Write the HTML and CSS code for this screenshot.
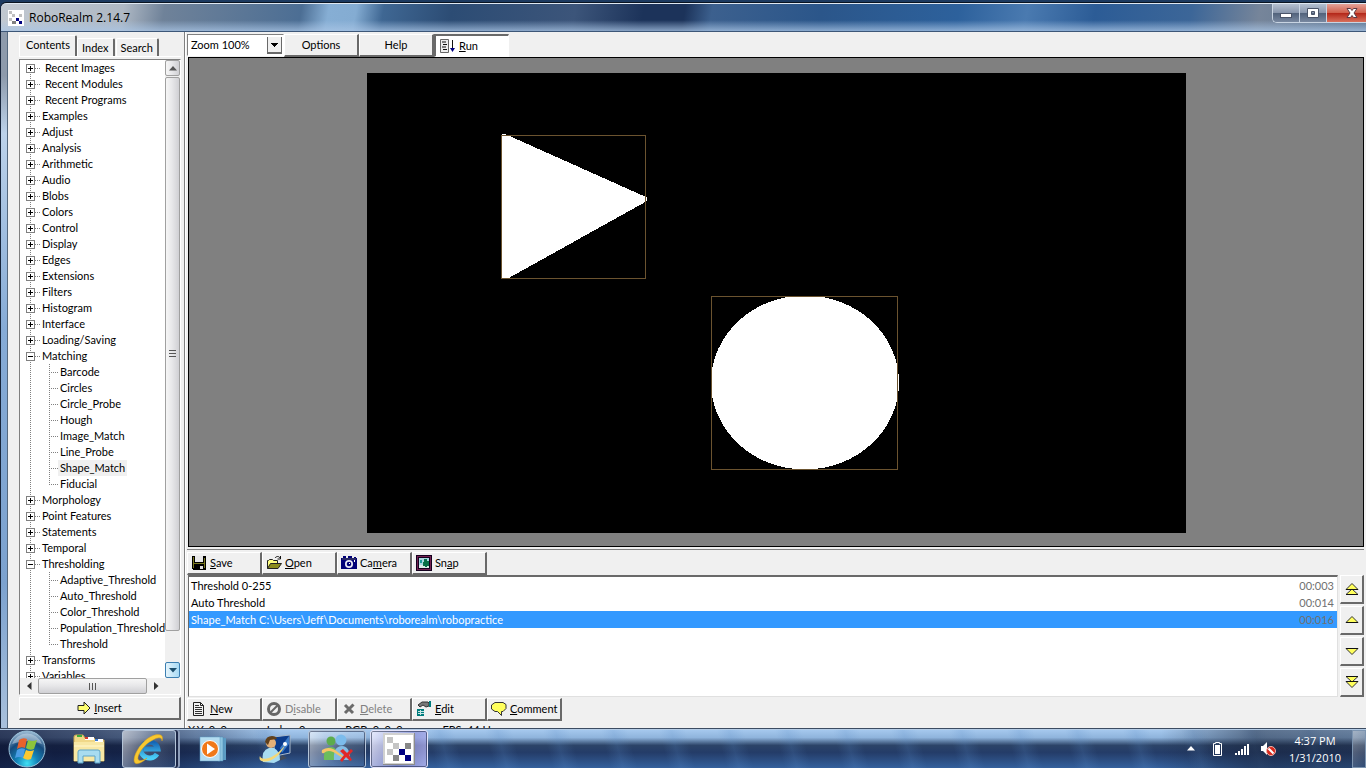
FILE: index.html
```html
<!DOCTYPE html>
<html lang="en">
<head>
    <meta charset="UTF-8">
    <meta name="viewport" content="width=device-width, initial-scale=1.0">
    <title>RoboRealm 2.14.7</title>
    <link rel="stylesheet" href="styles.css">
</head>
<body>
    <div class="window">
        <header class="titlebar">
            <svg class="logo" width="16" height="16" viewBox="0 0 16 16" shape-rendering="crispEdges">
                <rect width="16" height="16" fill="#fff"/>
                <path d="M1 1h3v3h-3zM4 4h3v3h-3zM1 8h3v3h-3zM11 4h3v3h-3z" fill="#c0c0c0"/>
                <path d="M4 11h4v3h-4z" fill="#808080"/>
                <path d="M8 8h3v3h-3zM11 11h3v3h-3z" fill="#000080"/>
            </svg>
            <h1>RoboRealm 2.14.7</h1>
            <div class="caption-buttons">
                <button class="min" aria-label="Minimize"><svg width="14" height="12" viewBox="0 0 14 12"><rect x="1.500" y="6.500" width="11" height="4" fill="#fff" stroke="#4a5468"/></svg></button>
                <button class="max" aria-label="Maximize"><svg width="14" height="12" viewBox="0 0 14 12"><path d="M1.500 1.500h11v9h-11z M5.500 4.500v3h3v-3z" fill="#fff" fill-rule="evenodd" stroke="#4a5468"/></svg></button>
                <button class="close" aria-label="Close"><svg width="14" height="12" viewBox="0 0 14 12"><path d="M2 1.500h3.500L7 3.500l1.500-2H12L9 6l3 4.500H8.500L7 8.500l-1.500 2H2L5 6z" fill="#fff" stroke="#5b3a44"/></svg></button>
            </div>
        </header>

        <div class="client">
            <aside class="sidebar">
                <div class="tabs" role="tablist">
                    <button class="tab active" role="tab">Contents</button>
                    <button class="tab" role="tab">Index</button>
                    <button class="tab" role="tab">Search</button>
                </div>
                <div class="treebox">
                    <div class="treerow">
                        <ul class="tree">
                            <li><button class="plus" aria-label="Expand"></button><span class="recent">Recent Images</span></li>
                            <li><button class="plus" aria-label="Expand"></button><span class="recent">Recent Modules</span></li>
                            <li><button class="plus" aria-label="Expand"></button><span class="recent">Recent Programs</span></li>
                            <li><button class="plus" aria-label="Expand"></button><span>Examples</span></li>
                            <li><button class="plus" aria-label="Expand"></button><span>Adjust</span></li>
                            <li><button class="plus" aria-label="Expand"></button><span>Analysis</span></li>
                            <li><button class="plus" aria-label="Expand"></button><span>Arithmetic</span></li>
                            <li><button class="plus" aria-label="Expand"></button><span>Audio</span></li>
                            <li><button class="plus" aria-label="Expand"></button><span>Blobs</span></li>
                            <li><button class="plus" aria-label="Expand"></button><span>Colors</span></li>
                            <li><button class="plus" aria-label="Expand"></button><span>Control</span></li>
                            <li><button class="plus" aria-label="Expand"></button><span>Display</span></li>
                            <li><button class="plus" aria-label="Expand"></button><span>Edges</span></li>
                            <li><button class="plus" aria-label="Expand"></button><span>Extensions</span></li>
                            <li><button class="plus" aria-label="Expand"></button><span>Filters</span></li>
                            <li><button class="plus" aria-label="Expand"></button><span>Histogram</span></li>
                            <li><button class="plus" aria-label="Expand"></button><span>Interface</span></li>
                            <li><button class="plus" aria-label="Expand"></button><span>Loading/Saving</span></li>
                            <li><button class="minus" aria-label="Collapse"></button><span>Matching</span>
                                <ul>
                                    <li><span>Barcode</span></li>
                                    <li><span>Circles</span></li>
                                    <li><span>Circle_Probe</span></li>
                                    <li><span>Hough</span></li>
                                    <li><span>Image_Match</span></li>
                                    <li><span>Line_Probe</span></li>
                                    <li><span class="current">Shape_Match</span></li>
                                    <li><span>Fiducial</span></li>
                                </ul>
                            </li>
                            <li><button class="plus" aria-label="Expand"></button><span>Morphology</span></li>
                            <li><button class="plus" aria-label="Expand"></button><span>Point Features</span></li>
                            <li><button class="plus" aria-label="Expand"></button><span>Statements</span></li>
                            <li><button class="plus" aria-label="Expand"></button><span>Temporal</span></li>
                            <li><button class="minus" aria-label="Collapse"></button><span>Thresholding</span>
                                <ul>
                                    <li><span>Adaptive_Threshold</span></li>
                                    <li><span>Auto_Threshold</span></li>
                                    <li><span>Color_Threshold</span></li>
                                    <li><span>Population_Threshold</span></li>
                                    <li><span>Threshold</span></li>
                                </ul>
                            </li>
                            <li><button class="plus" aria-label="Expand"></button><span>Transforms</span></li>
                            <li><button class="plus" aria-label="Expand"></button><span>Variables</span></li>
                        </ul>
                        <div class="vscroll">
                            <button class="sbtn" aria-label="Scroll up"><svg width="8" height="5" viewBox="0 0 8 5"><path d="M0 4.500L4 0l4 4.500z" fill="#555"/></svg></button>
                            <div class="vthumb"><i></i><i></i><i></i></div>
                            <button class="sbtn hot" aria-label="Scroll down"><svg width="8" height="5" viewBox="0 0 8 5"><path d="M0 0h8L4 4.500z" fill="#1d4f6e"/></svg></button>
                        </div>
                    </div>
                    <div class="hscroll">
                        <button class="flat" aria-label="Scroll left"><svg width="5" height="8" viewBox="0 0 5 8"><path d="M4.500 0v8L0 4z" fill="#333"/></svg></button>
                        <div class="hthumb"><i></i><i></i><i></i></div>
                        <button class="flat" aria-label="Scroll right"><svg width="5" height="8" viewBox="0 0 5 8"><path d="M0 0v8l4.500-4z" fill="#333"/></svg></button>
                    </div>
                </div>
                <button class="btn insert">
                    <svg width="14" height="14" viewBox="0 0 14 14"><path d="M1 4.500h6v-3.500l6 6-6 6v-3.500h-6z" fill="#ffff70" stroke="#222"/></svg>
                    <span><u>I</u>nsert</span>
                </button>
            </aside>

            <main class="main">
                <div class="toolbar">
                    <select class="zoom" aria-label="Zoom">
                        <option>Zoom 100%</option>
                    </select>
                    <button class="btn center">Options</button>
                    <button class="btn center">Help</button>
                    <button class="btn pressed">
                        <svg width="17" height="16" viewBox="0 0 17 16"><path d="M1.500 1.500h8v13h-8z" fill="#eee" stroke="#666"/><path d="M3 4h4M4 6.500h4M3 9h4M4 11.500h4" stroke="#111"/><path d="M13.500 2v10" stroke="#111"/><path d="M11 10h5l-2.500 4z" fill="#000080"/></svg>
                        <span><u>R</u>un</span>
                    </button>
                </div>

                <div class="viewer">
                    <svg class="image" width="819" height="460" viewBox="0 0 819 460" shape-rendering="crispEdges">
                        <rect width="819" height="460" fill="#000"/>
                        <path d="M135 61h3l141 63h1v4l-140 78h-5z" fill="#fff"/>
                        <rect x="134.500" y="62.500" width="144" height="143" fill="none" stroke="#6b532f"/>
                        <ellipse cx="438" cy="309.500" rx="94" ry="87" fill="#fff"/>
                        <rect x="344.500" y="223.500" width="186" height="173" fill="none" stroke="#6b532f"/>
                    </svg>
                </div>

                <div class="toolbar pipeline-top">
                    <button class="btn">
                        <svg width="16" height="16" viewBox="0 0 16 16" shape-rendering="crispEdges"><path d="M1 1h14v14H2l-1-1z" fill="#000"/><path d="M2 2h1v11h-1zM13 3h1v10h-1zM3 8h10v1h-10z" fill="#7b7b20"/><path d="M4 1h8v6h-8z" fill="#e8e8e8"/><path d="M9 11h3v3h-3z" fill="#ddd"/></svg>
                        <span><u>S</u>ave</span>
                    </button>
                    <button class="btn">
                        <svg width="16" height="16" viewBox="0 0 16 16"><path d="M1.500 13.500v-8h1l1-1h3l1 1h4v3" fill="#ffff80" stroke="#222"/><path d="M1.500 13.500l3-5h11l-3.500 5z" fill="#8c8c1c" stroke="#222"/><path d="M9 3c1.500-2 4-2 5 0M14.500 1v3h-3" fill="none" stroke="#111"/></svg>
                        <span><u>O</u>pen</span>
                    </button>
                    <button class="btn">
                        <svg width="16" height="16" viewBox="0 0 16 16"><path d="M0 3h2V1h3v2h2V1h4v2h2V2h2v1h1v11H0z" fill="#000078"/><path d="M1 4h14" stroke="#555"/><circle cx="8" cy="9" r="4" fill="#e8e8f4"/><circle cx="8" cy="9" r="2.300" fill="#000078"/><path d="M8 8h1v1h-1zM13 5h1v2h-1z" fill="#fff"/></svg>
                        <span>Ca<u>m</u>era</span>
                    </button>
                    <button class="btn">
                        <svg width="16" height="16" viewBox="0 0 16 16" shape-rendering="crispEdges"><path d="M0 0h16v16H0z" fill="#14001e"/><path d="M1.500 1.500h13v13h-13z" fill="none" stroke="#732050"/><path d="M3 3h10v10H3z" fill="#a8d8e0"/><path d="M3 10h10v3H3z" fill="#dcece8"/><path d="M8 4h3v2h2v5h-2v1h-2v-1h-2v-4h1z" fill="#087048"/><path d="M4 5h2v3h-2z" fill="#1c9c9c"/></svg>
                        <span>Sn<u>a</u>p</span>
                    </button>
                </div>

                <div class="pipeline">
                    <ul class="modules">
                        <li><span>Threshold 0-255</span><span class="time">00:003</span></li>
                        <li><span>Auto Threshold</span><span class="time">00:014</span></li>
                        <li class="selected"><span>Shape_Match C:\Users\Jeff\Documents\roborealm\robopractice</span><span class="time">00:016</span></li>
                    </ul>
                    <div class="order">
                        <button class="btn" aria-label="Move to top"><svg width="14" height="14" viewBox="0 0 14 14"><path d="M1 12.500L7 7l6 5.500zM1 7.500L7 1.500l6 6z" fill="#ffff5c" stroke="#333"/><path d="M1 7.500h12M1 12.500h12" stroke="#111"/></svg></button>
                        <button class="btn" aria-label="Move up"><svg width="14" height="14" viewBox="0 0 14 14"><path d="M1 9.500L7 3.500l6 6z" fill="#ffff5c" stroke="#333"/><path d="M1 9.500h12" stroke="#111"/></svg></button>
                        <button class="btn" aria-label="Move down"><svg width="14" height="14" viewBox="0 0 14 14"><path d="M1 4.500L7 10.500l6-6z" fill="#ffff5c" stroke="#333"/><path d="M1 4.500h12" stroke="#111"/></svg></button>
                        <button class="btn" aria-label="Move to bottom"><svg width="14" height="14" viewBox="0 0 14 14"><path d="M1 1.500L7 7l6-5.500zM1 6.500L7 12.500l6-6z" fill="#ffff5c" stroke="#333"/><path d="M1 1.500h12M1 6.500h12" stroke="#111"/></svg></button>
                    </div>
                </div>

                <div class="toolbar pipeline-bottom">
                    <button class="btn">
                        <svg width="16" height="16" viewBox="0 0 16 16"><path d="M2.500 1.500h7l3 3v10h-10z" fill="#f4f4f4" stroke="#222"/><path d="M9.500 1.500v3h3" fill="none" stroke="#222"/><path d="M4 4.500h4M4 6.500h7M4 8.500h7M4 10.500h7M4 12.500h7" stroke="#333"/></svg>
                        <span><u>N</u>ew</span>
                    </button>
                    <button class="btn" disabled>
                        <svg width="16" height="16" viewBox="0 0 16 16"><circle cx="8" cy="8" r="5.500" fill="none" stroke="#666" stroke-width="3"/><path d="M4.500 11.500l7-7" stroke="#666" stroke-width="2"/></svg>
                        <span>D<u>i</u>sable</span>
                    </button>
                    <button class="btn" disabled>
                        <svg width="16" height="16" viewBox="0 0 16 16"><path d="M4 4l8 8M12.500 3.500L4 12" stroke="#6a6a6a" stroke-width="3"/></svg>
                        <span><u>D</u>elete</span>
                    </button>
                    <button class="btn">
                        <svg width="16" height="16" viewBox="0 0 16 16"><path d="M2 4l4-3h6l1 1v3l-3 1-3-2-3 2z" fill="#777" stroke="#333"/><path d="M13 0h2v6h-2z" fill="#007c7c"/><path d="M1 8h7v7H1z" fill="#007c7c"/><path d="M2 10.500h6M2 12.500h6M4.500 9v5" stroke="#c8e4e4"/></svg>
                        <span><u>E</u>dit</span>
                    </button>
                    <button class="btn">
                        <svg width="16" height="16" viewBox="0 0 16 16"><path d="M4 1.500h8l3 2v4l-3 3h-1.500v4l-4-4H4L.5 8V4z" fill="#ffff5c" stroke="#333"/></svg>
                        <span><u>C</u>omment</span>
                    </button>
                </div>
                <div class="status"><span>X,Y: 0, 0</span><span>Index: 0</span><span>RGB: 0, 0, 0</span><span>FPS: 44 Hz</span></div>
            </main>
        </div>
    </div>

    <footer class="taskbar">
        <button class="start" aria-label="Start">
            <svg width="38" height="38" viewBox="0 0 38 38">
                <defs>
                    <radialGradient id="orb" cx="50%" cy="90%" r="85%">
                        <stop offset="0" stop-color="#3fe0f4"/>
                        <stop offset=".35" stop-color="#1383b8"/>
                        <stop offset=".7" stop-color="#164a7c"/>
                        <stop offset="1" stop-color="#8fb0cc"/>
                    </radialGradient>
                </defs>
                <circle cx="19" cy="19" r="18" fill="url(#orb)" stroke="#9cc4dc"/>
                <path d="M4 14a16 16 0 0 1 30 0q-14-6-30 0z" fill="#dce8f4" opacity=".45"/>
                <path d="M11 10q4-3 8-1l-2 9q-4-2-8 1z" fill="#e8622c"/>
                <path d="M20 10q4 2 9 0l-3 9q-4 2-8-1z" fill="#8cc43c"/>
                <path d="M9 20q4-3 8-1l-2 9q-4-2-8 0z" fill="#4a9ce4"/>
                <path d="M18 20q4 2 8 0l-3 9q-4 2-8-1z" fill="#fcc830"/>
            </svg>
        </button>
        <button class="task" aria-label="Windows Explorer">
            <svg width="34" height="32" viewBox="0 0 34 32">
                <path d="M2 4q0-2 2-2h7l2 3h9l2 2h8v21H2z" fill="#f0d888" stroke="#c8a850"/>
                <path d="M5 2h5v2H5z" fill="#3cac3c"/><path d="M13 4h9v3h-9zM23 6h8v3h-8z" fill="#fff"/><path d="M13 4h3v2h-3z" fill="#d83c2c"/><path d="M23 6h3v2h-3z" fill="#3c7cd4"/>
                <path d="M2 9h30v19H2z" fill="#f8e8a4"/><path d="M2 13h30" stroke="#fff8d0"/>
                <path d="M6 30V19q0-2 2-2h18q2 0 2 2v11h-5v-7H11v7z" fill="#a8dcf0" stroke="#5ca4c8"/>
            </svg>
        </button>
        <button class="task open stacked" aria-label="Internet Explorer">
            <svg width="34" height="32" viewBox="0 0 34 32">
                <defs><linearGradient id="ie" x1="0" y1="0" x2="0" y2="1"><stop offset="0" stop-color="#1464b4"/><stop offset="1" stop-color="#4cd0f8"/></linearGradient></defs>
                <path d="M25 21a8.500 8 0 1 1 1-5H12" fill="none" stroke="url(#ie)" stroke-width="5"/>
                <path d="M3 30C-1 26 8 8 20 3c8-3 12-1 10 5 0-4-4-4-9-1C12 11 5 22 6 26c1 3 6 1 9-1-4 4-10 7-12 5z" fill="#f8c830" stroke="#d89c18" stroke-width=".5"/>
            </svg>
        </button>
        <button class="task" aria-label="Windows Media Player">
            <svg width="30" height="30" viewBox="0 0 30 30">
                <path d="M22 4h6v22h-6z" fill="#5c9cc4"/><path d="M20 3h5v24h-5z" fill="#8cc4e0" stroke="#4c8cb4" stroke-width=".5"/><path d="M2 3h20v24H2z" fill="#b4dcf0" stroke="#5c9cc4" stroke-width=".5"/>
                <circle cx="12" cy="15" r="8.500" fill="#f07818" stroke="#fff"/><path d="M9 9.500l8 5.500-8 5.500z" fill="#fff"/>
            </svg>
        </button>
        <button class="task" aria-label="Remote Assistance">
            <svg width="34" height="30" viewBox="0 0 34 30">
                <path d="M15 3l17-2v18l-15 3z" fill="#0c3c8c" stroke="#a8b8c8"/><path d="M22 14L31 2v8l-7 9z" fill="#3c7cc8"/><path d="M24 21l5 3-8 3z" fill="#444c58"/>
                <path d="M5 28q-2-12 6-14h5q6 3 6 12l-6 3z" fill="#a8dcf0"/><circle cx="13" cy="9" r="5" fill="#e4b078"/><path d="M7 8q1-6 7-6 4 0 5 3l-7 1-2 5z" fill="#60401c"/>
                <path d="M2 22c1 5 14 4 25-11-5 13-19 20-25 15-1-2 0-4 0-4z" fill="#f4d878"/><circle cx="27" cy="10" r="2" fill="#fff"/>
            </svg>
        </button>
        <button class="task open" aria-label="Windows Live Messenger">
            <svg width="34" height="30" viewBox="0 0 34 30">
                <circle cx="11" cy="7" r="4.500" fill="#5cac4c"/><path d="M4 26q-1-13 7-13 7 0 7 13z" fill="#6cbc5c"/>
                <circle cx="21" cy="6" r="5.500" fill="#7cbcec"/><path d="M14 26q-1-14 8-14 8 0 8 14z" fill="#84bce4"/>
                <path d="M2 16q8-5 17 3t13-2q-5 11-14 4T4 19q-3 1-2-3z" fill="#f4c468"/>
                <path d="M20 17l3-2 4 4 4-4 2 2-4 4 3 5-2 1-4-4-4 5-2-2 4-5z" fill="#e02828"/>
            </svg>
        </button>
        <button class="task open focused" aria-label="RoboRealm">
            <svg width="32" height="32" viewBox="0 0 32 32" shape-rendering="crispEdges">
                <rect width="32" height="32" fill="#8c8c8c"/><rect width="31" height="31" fill="#d0d0d0"/><rect x="2" y="2" width="28" height="28" fill="#fff"/>
                <path d="M4 4h6v6h-6zM10 10h6v6h-6zM4 16h6v6h-6z" fill="#c4c4c4"/>
                <path d="M22 10h6v6h-6zM10 22h6v6h-6z" fill="#888"/><path d="M16 16h6v6h-6zM22 22h6v6h-6z" fill="#000080"/>
            </svg>
        </button>
        <div class="tray">
            <svg width="8" height="5" viewBox="0 0 8 5"><path d="M0 4.500L4 0l4 4.500z" fill="#fff"/></svg>
            <svg width="11" height="16" viewBox="0 0 11 16"><path d="M3.500 1.500h4v1h2v12h-8v-12h2z" fill="none" stroke="#fff"/><path d="M3 4h5v9H3z" fill="#fff"/></svg>
            <svg width="15" height="14" viewBox="0 0 15 14"><path d="M1 11h2v2h-2zM4 9h2v4h-2zM7 7h2v6h-2zM10 4h2v9h-2zM13 2h2v11h-2z" fill="#fff"/></svg>
            <svg width="16" height="16" viewBox="0 0 16 16"><path d="M1 5h2l4-4v13l-4-4H1z" fill="#fff"/><circle cx="11" cy="10" r="4.500" fill="#d8281c" stroke="#f0b0a8"/><path d="M8.500 7.500l5 5" stroke="#fff" stroke-width="2"/></svg>
        </div>
        <div class="clock"><span>4:37 PM</span><span>1/31/2010</span></div>
        <button class="peek" aria-label="Show desktop"></button>
    </footer>
</body>
</html>
```

FILE: styles.css
```css
*{
    box-sizing: border-box;
}
body{
    margin: 0;
    height: 100vh;
    display: flex;
    flex-direction: column;
    overflow: hidden;
    font-family: Lato, "Liberation Sans", sans-serif;
    font-size: 11px;
    line-height: 16px;
    color: #000;
    background-color: #1c3a60;
}
button, select{
    font: inherit;
    color: inherit;
    margin: 0;
    padding: 0;
    border: 0;
    border-radius: 0;
    background: none;
}
svg{
    display: block;
    flex: none;
}
ul{
    margin: 0;
    padding: 0;
    list-style: none;
}

/* window frame */
.window{
    flex: 1;
    min-height: 0;
    display: flex;
    flex-direction: column;
    margin-top: 2px;
    border-top: 1px solid #0a1420;
    border-left: 1px solid #16243a;
    border-top-left-radius: 6px;
    background: linear-gradient(#8d9aab, #8d9aab 10%, #bcd2ea 18%, #86abd6 45%, #7ca2cf 80%, #a8c0dc);
}
.titlebar{
    flex: none;
    height: 29px;
    display: flex;
    align-items: center;
    padding-left: 7px;
    border-top: 1px solid #dfe8f2;
    border-bottom: 1px solid #3d5778;
    border-top-left-radius: 6px;
    background:
        linear-gradient(transparent 60%, rgba(170, 198, 230, 0.75)),
        linear-gradient(100deg, #c2c9d1 0, #aeb8c4 9%, #6f8299 12%, #4c6e94 22%, #86aed4 24%, #84acd2 26%, #3f6793 28%, #2c4c74 33%, #3c557a 42%, #1c335a 47%, #1c335a 50%, #3c608e 52%, #2b568a 60%, #2d619c 70%, #4a7ab0 75%, #2c5c96 80%, #3c6698 87%, #76859a 92%, #5c7490);
}
.titlebar h1{
    flex: 1;
    margin: 0 0 0 5px;
    font-family: "Open Sans", "Noto Sans", sans-serif;
    font-size: 12px;
    font-weight: normal;
}
.caption-buttons{
    align-self: flex-start;
    display: flex;
    height: 19px;
    border: 1px solid #c8d4e2;
    border-top: 0;
    border-right: 0;
    border-bottom-left-radius: 5px;
    overflow: hidden;
}
.caption-buttons button{
    width: 27px;
    display: flex;
    align-items: center;
    justify-content: center;
    border-right: 1px solid #c8d4e2;
    background: linear-gradient(#b4c0d0, #8896ac 48%, #52637c 52%, #7888a0);
}
.caption-buttons .close{
    width: 39px;
    padding-left: 10px;
    border-right: 0;
    background: linear-gradient(#e4a298, #d0604c 48%, #b4281a 52%, #d8705c);
}
.client{
    flex: 1;
    min-height: 0;
    display: flex;
    margin-left: 6px;
    border-left: 1px solid #54687e;
    background-color: #f0f0f0;
}

/* left panel */
.sidebar{
    flex: none;
    width: 177px;
    display: flex;
    flex-direction: column;
    padding: 4px 3px 8px 11px;
    border-right: 1px solid #808080;
}
.tabs{
    display: flex;
    align-items: flex-end;
    height: 21px;
    border-bottom: 1px solid #fff;
}
.tab{
    height: 18px;
    padding: 0 4px;
    border-top: 1px solid #fff;
    border-left: 1px solid #fff;
    border-right: 2px solid #696969;
    border-radius: 2px 2px 0 0;
    margin-right: 1px;
}
.tab.active{
    height: 21px;
    padding: 0 5px 3px 6px;
    margin: 0;
}
.treebox{
    flex: 1;
    min-height: 0;
    display: flex;
    flex-direction: column;
    margin-top: 2px;
    border: 1px solid #808080;
    border-right-color: #fff;
    border-bottom-color: #fff;
    background-color: #fff;
}
.treerow{
    flex: 1;
    min-height: 0;
    display: flex;
}
.tree{
    flex: 1;
    min-width: 0;
    height: 100%;
    overflow: hidden;
    white-space: nowrap;
    background: repeating-linear-gradient(#808080 0 1px, transparent 1px 2px) 10px 8px / 1px 100% no-repeat;
}
.tree > li{
    display: grid;
    grid-template-columns: 9px 1fr;
    align-items: center;
    padding-left: 6px;
}
.tree > li > button{
    width: 9px;
    height: 9px;
    border: 1px solid #808080;
    background: linear-gradient(#000, #000) center / 5px 1px no-repeat, #fff;
}
.tree > li > .plus{
    background: linear-gradient(#000, #000) center / 5px 1px no-repeat, linear-gradient(#000, #000) center / 1px 5px no-repeat, #fff;
}
.tree > li > span{
    display: flex;
    align-items: center;
    gap: 2px;
}
.tree > li > span::before{
    content: "";
    width: 5px;
    border-top: 1px dotted #808080;
}
.tree > li > .recent{
    gap: 5px;
}
.tree ul{
    grid-column: 1 / -1;
    padding-left: 23px;
}
.tree ul li{
    display: flex;
    align-items: center;
    background: repeating-linear-gradient(#808080 0 1px, transparent 1px 2px) 0 0 / 1px 100% no-repeat;
}
.tree ul li:last-child{
    background-size: 1px 9px;
}
.tree ul li::before{
    content: "";
    flex: none;
    width: 9px;
    border-top: 1px dotted #808080;
}
.tree ul span{
    padding: 0 2px;
}
.current{
    background-color: #f0f0f0;
}
.vscroll{
    flex: none;
    width: 15px;
    display: flex;
    flex-direction: column;
    background-color: #f0f0f0;
}
.sbtn, .vthumb, .hthumb{
    display: flex;
    align-items: center;
    justify-content: center;
    border: 1px solid #a0a0a0;
    border-radius: 2px;
    background: linear-gradient(90deg, #f6f6f6, #e8e8ea 45%, #d0d0d4);
}
.sbtn{
    flex: none;
    height: 16px;
}
.sbtn.hot{
    border-color: #3c7fb1;
    background: linear-gradient(90deg, #e4f4fc, #a9dbf5);
}
.vthumb{
    height: 554px;
    margin: 1px 0 auto;
    flex-direction: column;
    gap: 1px;
}
.vthumb i{
    width: 7px;
    height: 2px;
    border-top: 1px solid #555;
}
.hscroll{
    flex: none;
    height: 16px;
    display: flex;
    margin-right: 15px;
    background-color: #f0f0f0;
    box-shadow: 15px 0 #f0f0f0;
}
.flat{
    width: 18px;
    display: flex;
    align-items: center;
    justify-content: center;
}
.hthumb{
    flex: 1;
    gap: 1px;
    background: linear-gradient(#f6f6f6, #e8e8ea 45%, #d0d0d4);
}
.hthumb i{
    width: 2px;
    height: 7px;
    border-left: 1px solid #555;
}

/* raised buttons */
.btn{
    width: 75px;
    height: 23px;
    display: flex;
    align-items: center;
    gap: 3px;
    padding: 0 3px;
    border: 1px solid #fff;
    border-right: 2px solid #696969;
    border-bottom: 2px solid #696969;
    background-color: #f0f0f0;
}
.btn:disabled{
    color: #808080;
}
.center, .insert{
    justify-content: center;
}
.insert{
    flex: none;
    width: 100%;
    margin-top: 2px;
}
.pressed{
    border: 1px solid #fff;
    border-top: 2px solid #696969;
    border-left: 2px solid #696969;
    background-color: #fff;
}

/* right panel */
.main{
    flex: 1;
    min-width: 0;
    display: flex;
    flex-direction: column;
    padding: 2px 2px 0;
    border-left: 1px solid #fff;
}
.toolbar{
    flex: none;
    display: flex;
    margin-left: -1px;
}
.zoom{
    width: 97px;
    height: 22px;
    padding: 0 3px;
    appearance: none;
    border: 1px solid #808080;
    border-right-color: #fff;
    border-bottom-color: #fff;
    background:
        linear-gradient(#000, #000) right 5px top 8px / 7px 1px no-repeat,
        linear-gradient(#000, #000) right 6px top 9px / 5px 1px no-repeat,
        linear-gradient(#000, #000) right 7px top 10px / 3px 1px no-repeat,
        linear-gradient(#000, #000) right 8px top 11px / 1px 1px no-repeat,
        linear-gradient(#f0f0f0, #f0f0f0) right 2px top 2px / 13px 15px no-repeat,
        linear-gradient(#696969, #696969) right 1px top 2px / 15px 17px no-repeat,
        #fff;
}
.viewer{
    flex: 1;
    min-height: 0;
    display: flex;
    align-items: center;
    justify-content: center;
    padding-top: 1px;
    border: 1px solid #000;
    background-color: #808080;
}
.image{
    max-width: 100%;
    max-height: 100%;
}
.pipeline-top{
    margin-top: 2px;
    padding-top: 2px;
    border-top: 1px solid #808080;
}
.pipeline{
    flex: none;
    display: flex;
    gap: 2px;
}
.modules{
    flex: 1;
    border: 1px solid #e0e0e0;
    border-top: 2px solid #696969;
    border-left: 1px solid #696969;
    background-color: #fff;
}
.modules li{
    display: flex;
    justify-content: space-between;
    padding: 0 3px 0 2px;
    line-height: 17px;
}
.modules .selected{
    color: #fff;
    background-color: #3399ff;
}
.time{
    color: #707070;
}
.order{
    display: flex;
    flex-direction: column;
    gap: 2px;
}
.order .btn{
    width: 24px;
    height: 29px;
    justify-content: center;
}
.pipeline-bottom{
    margin-top: 1px;
}
/* runs on under the taskbar */
.status{
    flex: none;
    height: 7px;
    display: flex;
    gap: 40px;
    overflow: hidden;
    padding-top: 1px;
}

/* taskbar */
.taskbar{
    flex: none;
    height: 40px;
    display: flex;
    align-items: center;
    gap: 4px;
    border-top: 1px solid #3c4c62;
    box-shadow: inset 0 1px #b4cce6;
    background:
        linear-gradient(90deg, rgba(8, 14, 44, 0.75), rgba(8, 14, 44, 0.5) 12%, transparent 20%, transparent 85%, rgba(20, 28, 48, 0.5) 92%, rgba(20, 28, 48, 0.4)),
        repeating-linear-gradient(75deg, transparent 0 30px, rgba(90, 140, 200, 0.2) 42px, transparent 56px),
        linear-gradient(#a8cbf0, #8fb4dc 22%, #2c4468 42%, #243c68 60%, #34609c);
}
.taskbar button{
    flex: none;
    display: flex;
    align-items: center;
    justify-content: center;
    height: 38px;
}
.start{
    width: 54px;
    margin-right: 2px;
}
.task{
    width: 58px;
    border-radius: 3px;
}
.open{
    border: 1px solid #b4c4d8;
    box-shadow: inset 0 0 0 1px rgba(10, 20, 50, 0.5);
    background: linear-gradient(120deg, rgba(255, 255, 255, 0.6), rgba(255, 255, 255, 0.15) 55%, rgba(255, 255, 255, 0.05));
}
.stacked{
    width: 54px;
    margin-right: 4px;
    box-shadow: 2px 0 #1c2848, 4px 0 #8c9cb8;
}
.focused{
    border-color: #e4e4fa;
    background: linear-gradient(120deg, rgba(240, 240, 255, 0.9), rgba(150, 150, 220, 0.7) 60%, rgba(190, 190, 250, 0.8));
}
.tray{
    display: flex;
    align-items: center;
    gap: 13px;
    margin-left: auto;
    margin-right: 2px;
}
.tray svg:nth-child(n+3){
    margin-left: -2px;
}
.tray svg:first-child{
    margin-right: 4px;
}
.clock{
    display: flex;
    flex-direction: column;
    align-items: center;
    width: 66px;
    font-family: "Open Sans", "Noto Sans", sans-serif;
    line-height: 17px;
    color: #fff;
}
.taskbar .peek{
    width: 14px;
    border: 1px solid #7c94b0;
    background: linear-gradient(135deg, rgba(255, 255, 255, 0.4), rgba(255, 255, 255, 0.05));
}
```
